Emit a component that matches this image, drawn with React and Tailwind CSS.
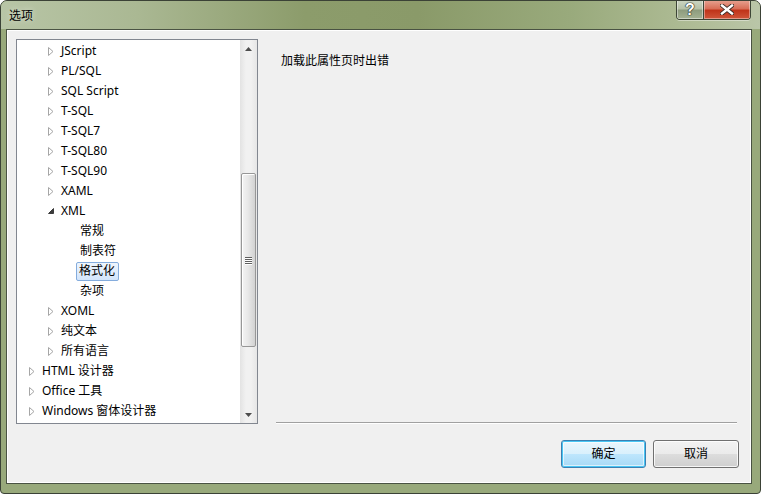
import React from "react"

const treeItems = [
    { label: "JScript", level: 2, arrow: "closed" },
    { label: "PL/SQL", level: 2, arrow: "closed" },
    { label: "SQL Script", level: 2, arrow: "closed" },
    { label: "T-SQL", level: 2, arrow: "closed" },
    { label: "T-SQL7", level: 2, arrow: "closed" },
    { label: "T-SQL80", level: 2, arrow: "closed" },
    { label: "T-SQL90", level: 2, arrow: "closed" },
    { label: "XAML", level: 2, arrow: "closed" },
    { label: "XML", level: 2, arrow: "open" },
    { label: "常规", level: 3 },
    { label: "制表符", level: 3 },
    { label: "格式化", level: 3, selected: true },
    { label: "杂项", level: 3 },
    { label: "XOML", level: 2, arrow: "closed" },
    { label: "纯文本", level: 2, arrow: "closed" },
    { label: "所有语言", level: 2, arrow: "closed" },
    { label: "HTML 设计器", level: 1, arrow: "closed" },
    { label: "Office 工具", level: 1, arrow: "closed" },
    { label: "Windows 窗体设计器", level: 1, arrow: "closed" },
]

const indent = { 1: "pl-[12px]", 2: "pl-[31px]", 3: "pl-[50px]" }

function Arrow({ kind }) {
    if (kind === "closed") {
        return (
            <svg width="6" height="9" viewBox="0 0 6 9">
                <path d="M0.5 0.5 L5 4.5 L0.5 8.5 Z" fill="#fff" stroke="#a6a6a6" strokeWidth="1" />
            </svg>
        )
    }
    if (kind === "open") {
        return (
            <svg width="6" height="6" viewBox="0 0 6 6">
                <path d="M5.5 0.5 L5.5 5.5 L0.5 5.5 Z" fill="#3c3c3c" stroke="#3c3c3c" strokeWidth="1" strokeLinejoin="round" />
            </svg>
        )
    }
    return null
}

function TreeRow({ item }) {
    return (
        <div className={`h-[20px] flex items-center ${indent[item.level]}`} >
            <div className="w-[10px] flex items-center" >
                <Arrow kind={item.arrow} />
            </div>
            <span
                className={
                    item.selected
                        ? "h-[19px] flex items-center pl-[2px] pr-[3px] -ml-px rounded-[2px] border border-[#84acdd] bg-[linear-gradient(180deg,#eef5fd,#d3e5fb)] text-black"
                        : "h-[19px] flex items-center px-[2px] border border-transparent text-black"
                }
            >
                {item.label}
            </span>
        </div>
    )
}

function ScrollBar() {
    return (
        <div className="w-[17px] flex flex-col bg-[linear-gradient(90deg,#e3e3e3,#f1f1f1_35%,#f1f1f1_65%,#e6e6e6)]" >
            <div className="h-[17px] flex items-center justify-center" >
                <svg width="7" height="4" viewBox="0 0 7 4">
                    <path d="M3.5 0 L7 4 L0 4 Z" fill="#4d4d4d" />
                </svg>
            </div>
            <div className="flex-1 flex flex-col items-center" >
                <div className="mt-[116px] w-[15px] h-[174px] rounded-[2px] border border-[#979797] bg-[linear-gradient(90deg,#f4f4f4,#e8e8e8_45%,#d2d2d2)] shadow-[inset_1px_1px_0_#fff] flex flex-col items-center justify-center gap-[1px]" >
                    {
                        [1, 2, 3, 4].map(i => (
                            <div key={i} className="w-[7px] h-px bg-[#5f5f5f] shadow-[0_1px_0_#fff]" />
                        ))
                    }
                </div>
            </div>
            <div className="h-[17px] flex items-center justify-center" >
                <svg width="7" height="4" viewBox="0 0 7 4">
                    <path d="M0 0 L7 0 L3.5 4 Z" fill="#4d4d4d" />
                </svg>
            </div>
        </div>
    )
}

function CaptionButtons() {
    return (
        <div className="self-start -mt-px flex h-[20px] rounded-b-[4px] border border-t-0 border-[#3d4636] overflow-hidden shadow-[0_1px_0_rgba(255,255,255,0.4)]" >
            <div className="w-[27px] flex items-center justify-center border-r border-[#3d4636] bg-[linear-gradient(180deg,#cdd6c4,#b6c2a8_45%,#8e9c7e_55%,#a5b294)] shadow-[inset_0_0_0_1px_rgba(255,255,255,0.45)]" >
                <span className="text-[16px] font-bold leading-none text-white font-['Liberation_Sans',sans-serif] [text-shadow:0_0_1px_#2c3328,0_0_1px_#2c3328,0_0_1px_#2c3328,0_0_1px_#2c3328]" >
                    ?
                </span>
            </div>
            <div className="w-[46px] flex items-center justify-center bg-[linear-gradient(180deg,#e7a493,#d86f58_45%,#c0341a_55%,#d0563a)] shadow-[inset_0_0_0_1px_rgba(255,255,255,0.4)]" >
                <svg width="14" height="11" viewBox="0 0 14 11">
                    <path d="M2 1.5 L12 9.5 M12 1.5 L2 9.5" stroke="#3a2a24" strokeWidth="4.2" strokeLinecap="square" />
                    <path d="M2 1.5 L12 9.5 M12 1.5 L2 9.5" stroke="#fff" strokeWidth="2.4" strokeLinecap="square" />
                </svg>
            </div>
        </div>
    )
}

export default function App() {
    return (
        <div className="w-[761px] h-[494px] bg-white font-['Segoe_UI','Noto_Sans','Noto_Sans_CJK_SC',sans-serif] text-[12px]" >
            <div className="w-full h-full flex flex-col border border-[#3b4236] rounded-t-[7px] rounded-b-[4px] overflow-hidden bg-[#98a97b] pl-[5px] pr-[8px] pb-[9px]" >

                <div className="h-[28px] -ml-[5px] -mr-[8px] pl-[8px] pr-[9px] flex items-center bg-[linear-gradient(90deg,#b8c5a6_0%,#aab893_18%,#8c9c6b_40%,#8a9a69_55%,#99aa7c_75%,#b0bd97_92%,#bac6a8_100%)]" >
                    <span className="text-black text-[12px] font-['Noto_Sans_CJK_SC',sans-serif] [text-shadow:0_0_6px_rgba(255,255,255,0.6)]" >
                        选项
                    </span>
                    <div className="ml-auto" />
                    <CaptionButtons />
                </div>

                <div className="flex-1 flex flex-col border border-[#4a5343] bg-[#f0f0f0] shadow-[inset_1px_1px_0_#fff,inset_-1px_-1px_0_#fff]" >

                    <div className="flex pl-[9px] pt-[9px] pr-[14px]" >
                        <div className="w-[242px] h-[385px] border border-[#828790] bg-white flex" >
                            <div className="flex-1 flex flex-col pt-px" >
                                {
                                    treeItems.map(item => (
                                        <TreeRow key={item.label} item={item} />
                                    ))
                                }
                            </div>
                            <ScrollBar />
                        </div>

                        <div className="ml-[18px] flex-1 flex flex-col h-[385px]" >
                            <p className="mt-[14px] pl-[5px] text-black leading-[16px]" >
                                加载此属性页时出错
                            </p>
                            <div className="mt-auto h-px bg-[#a0a0a0]" />
                            <div className="h-px bg-white" />
                        </div>
                    </div>

                    <div className="flex justify-end gap-[7px] pt-[16px] pr-[12px]" >
                        <button className="w-[85px] h-[28px] rounded-[3px] border border-[#3c7fb1] bg-[linear-gradient(180deg,#eaf6fd,#d9f0fc_50%,#bee6fd_50%,#a7d9f5)] shadow-[inset_0_0_0_1px_#48c6f4,inset_0_0_0_2px_rgba(255,255,255,0.6)] text-black text-[12px]" >
                            确定
                        </button>
                        <button className="w-[86px] h-[28px] rounded-[3px] border border-[#707070] bg-[linear-gradient(180deg,#f2f2f2,#ebebeb_50%,#dddddd_50%,#cfcfcf)] shadow-[inset_0_0_0_1px_rgba(255,255,255,0.8)] text-black text-[12px]" >
                            取消
                        </button>
                    </div>

                </div>
            </div>
        </div>
    )
}
